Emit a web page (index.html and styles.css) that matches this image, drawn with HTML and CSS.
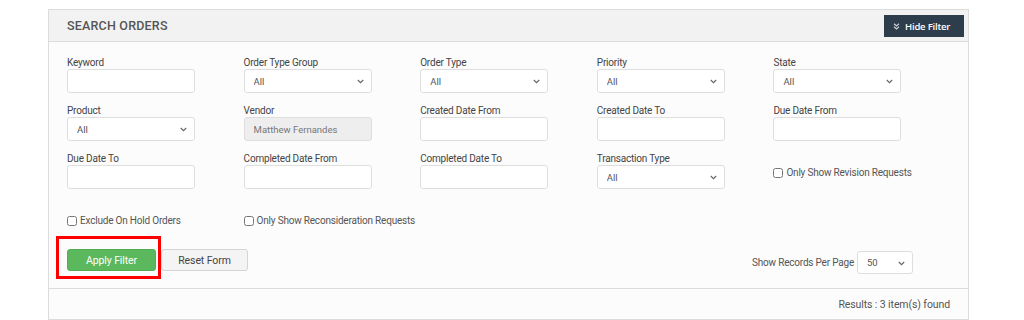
FILE: index.html
```html
<!DOCTYPE html>
<html lang="en">
<head>
    <meta charset="UTF-8">
    <meta name="viewport" content="width=device-width, initial-scale=1.0">
    <title>Search Orders</title>
    <link rel="stylesheet" href="styles.css">
</head>
<body>

    <div class="panel">
        <div class="panel-head">
            <h2 class="panel-title">Search Orders</h2>
            <button class="btn-hide">
                <svg width="7" height="7" viewBox="0 0 7 7"><path d="M1 0.8 L3.5 3 L6 0.8 M1 3.8 L3.5 6 L6 3.8" fill="none" stroke="#c9d0d8" stroke-width="1.2"/></svg>
                Hide Filter
            </button>
        </div>

        <div class="panel-body">
            <div class="filter-grid">
                <div class="field">
                    <label>Keyword</label>
                    <input type="text" class="control">
                </div>
                <div class="field">
                    <label>Order Type Group</label>
                    <div class="select-wrap"><select class="control"><option>All</option></select><svg class="caret" width="7" height="5" viewBox="0 0 7 5"><path d="M0.8 1 L3.5 3.6 L6.2 1" fill="none" stroke="#666" stroke-width="1.2"/></svg></div>
                </div>
                <div class="field">
                    <label>Order Type</label>
                    <div class="select-wrap"><select class="control"><option>All</option></select><svg class="caret" width="7" height="5" viewBox="0 0 7 5"><path d="M0.8 1 L3.5 3.6 L6.2 1" fill="none" stroke="#666" stroke-width="1.2"/></svg></div>
                </div>
                <div class="field">
                    <label>Priority</label>
                    <div class="select-wrap"><select class="control"><option>All</option></select><svg class="caret" width="7" height="5" viewBox="0 0 7 5"><path d="M0.8 1 L3.5 3.6 L6.2 1" fill="none" stroke="#666" stroke-width="1.2"/></svg></div>
                </div>
                <div class="field">
                    <label>State</label>
                    <div class="select-wrap"><select class="control"><option>All</option></select><svg class="caret" width="7" height="5" viewBox="0 0 7 5"><path d="M0.8 1 L3.5 3.6 L6.2 1" fill="none" stroke="#666" stroke-width="1.2"/></svg></div>
                </div>

                <div class="field">
                    <label>Product</label>
                    <div class="select-wrap"><select class="control"><option>All</option></select><svg class="caret" width="7" height="5" viewBox="0 0 7 5"><path d="M0.8 1 L3.5 3.6 L6.2 1" fill="none" stroke="#666" stroke-width="1.2"/></svg></div>
                </div>
                <div class="field">
                    <label>Vendor</label>
                    <input type="text" class="control" value="Matthew Fernandes" disabled>
                </div>
                <div class="field">
                    <label>Created Date From</label>
                    <input type="text" class="control">
                </div>
                <div class="field">
                    <label>Created Date To</label>
                    <input type="text" class="control">
                </div>
                <div class="field">
                    <label>Due Date From</label>
                    <input type="text" class="control">
                </div>

                <div class="field">
                    <label>Due Date To</label>
                    <input type="text" class="control">
                </div>
                <div class="field">
                    <label>Completed Date From</label>
                    <input type="text" class="control">
                </div>
                <div class="field">
                    <label>Completed Date To</label>
                    <input type="text" class="control">
                </div>
                <div class="field">
                    <label>Transaction Type</label>
                    <div class="select-wrap"><select class="control"><option>All</option></select><svg class="caret" width="7" height="5" viewBox="0 0 7 5"><path d="M0.8 1 L3.5 3.6 L6.2 1" fill="none" stroke="#666" stroke-width="1.2"/></svg></div>
                </div>
                <div class="field field-check">
                    <label class="check"><input type="checkbox"> Only Show Revision Requests</label>
                </div>
            </div>

            <div class="filter-grid check-row">
                <label class="check"><input type="checkbox"> Exclude On Hold Orders</label>
                <label class="check wide"><input type="checkbox"> Only Show Reconsideration Requests</label>
            </div>

            <div class="action-row">
                <div class="buttons">
                    <span class="highlight">
                        <button class="btn btn-apply">Apply Filter</button>
                    </span>
                    <button class="btn btn-reset">Reset Form</button>
                </div>
                <div class="per-page">
                    <span>Show Records Per Page</span>
                    <div class="select-wrap small"><select class="control"><option>50</option></select><svg class="caret" width="7" height="5" viewBox="0 0 7 5"><path d="M0.8 1 L3.5 3.6 L6.2 1" fill="none" stroke="#666" stroke-width="1.2"/></svg></div>
                </div>
            </div>
        </div>

        <div class="panel-foot">Results : 3 item(s) found</div>
    </div>

</body>
</html>
```

FILE: styles.css
```css
body {
    margin: 0;
    padding: 9px 0 0 48px;
    background-color: #fff;
    font-family: Roboto, "Liberation Sans", Arial, sans-serif;
    color: #444;
}

.panel {
    width: 919px;
    border: 1px solid #dcdcdc;
    background-color: #fcfcfc;
}

.panel-head {
    display: flex;
    justify-content: space-between;
    align-items: center;
    height: 31px;
    padding: 0 4px 0 18px;
    background-color: #f2f2f2;
    border-bottom: 1px solid #dcdcdc;
}

.panel-title {
    margin: 0;
    font-size: 12.5px;
    font-weight: 500;
    text-transform: uppercase;
    color: #555;
    letter-spacing: 0.2px;
}

.btn-hide {
    display: flex;
    align-items: center;
    gap: 5px;
    height: 22px;
    width: 80px;
    padding: 0 0 0 9px;
    margin-top: 1px;
    border: none;
    background-color: #2e3d4c;
    color: #fff;
    font-family: "Open Sans", Lato, sans-serif;
    font-size: 9.5px;
    font-weight: 600;
    letter-spacing: -0.2px;
    cursor: pointer;
}

.panel-body {
    padding: 15px 18px 14px 18px;
}

.filter-grid {
    display: grid;
    grid-template-columns: repeat(5, 1fr);
    row-gap: 12px;
}

.field label {
    display: block;
    font-size: 10px;
    line-height: 12px;
    letter-spacing: -0.2px;
    color: #444;
}

.control {
    box-sizing: border-box;
    width: 128px;
    height: 24px;
    margin: 0;
    padding: 0 9px;
    border: 1px solid #dedede;
    border-radius: 3px;
    background-color: #fff;
    font-family: Roboto, "Liberation Sans", Arial, sans-serif;
    font-size: 9.5px;
    color: #555;
    outline: none;
}

input.control:disabled {
    background-color: #eee;
    color: #777;
}

select.control {
    appearance: none;
    -webkit-appearance: none;
}

.select-wrap {
    position: relative;
    width: 128px;
}

.select-wrap .caret {
    position: absolute;
    right: 8px;
    top: 10px;
    pointer-events: none;
}

.field-check {
    padding-top: 14px;
}

.field .check,
.check {
    display: flex;
    align-items: center;
    font-size: 10px;
    line-height: 12px;
    letter-spacing: -0.2px;
    color: #555;
}

.check input {
    width: 10px;
    height: 10px;
    margin: 0 3px 0 0;
}

.check.wide {
    grid-column: span 2;
}

.check-row {
    margin-top: 26px;
}

.action-row {
    display: flex;
    justify-content: space-between;
    align-items: flex-start;
    margin-top: 22px;
}

.buttons {
    display: flex;
    gap: 5px;
}

.highlight {
    position: relative;
    display: flex;
}

.highlight::after {
    content: "";
    position: absolute;
    left: -11px;
    right: -5px;
    top: -13px;
    bottom: -8px;
    border: 3px solid #f00;
    pointer-events: none;
}

.btn {
    height: 22px;
    border-radius: 3px;
    font-family: Roboto, "Liberation Sans", Arial, sans-serif;
    font-size: 10.5px;
    letter-spacing: -0.1px;
    cursor: pointer;
}

.btn-apply {
    width: 89px;
    background-color: #5cb85c;
    border: 1px solid #53ad53;
    color: #fff;
}

.btn-reset {
    width: 87px;
    background-color: #f4f4f4;
    border: 1px solid #d5d5d5;
    color: #444;
}

.per-page {
    display: flex;
    align-items: center;
    gap: 3px;
    margin-right: 37px;
    margin-top: 2px;
    font-size: 10px;
    letter-spacing: -0.2px;
    color: #555;
}

.select-wrap.small {
    width: 56px;
}

.select-wrap.small .control {
    width: 56px;
    height: 23px;
}

.panel-foot {
    height: 30px;
    display: flex;
    justify-content: flex-end;
    align-items: center;
    padding: 0 18px;
    border-top: 1px solid #dcdcdc;
    font-size: 10.5px;
    letter-spacing: -0.1px;
    color: #555;
}
```
